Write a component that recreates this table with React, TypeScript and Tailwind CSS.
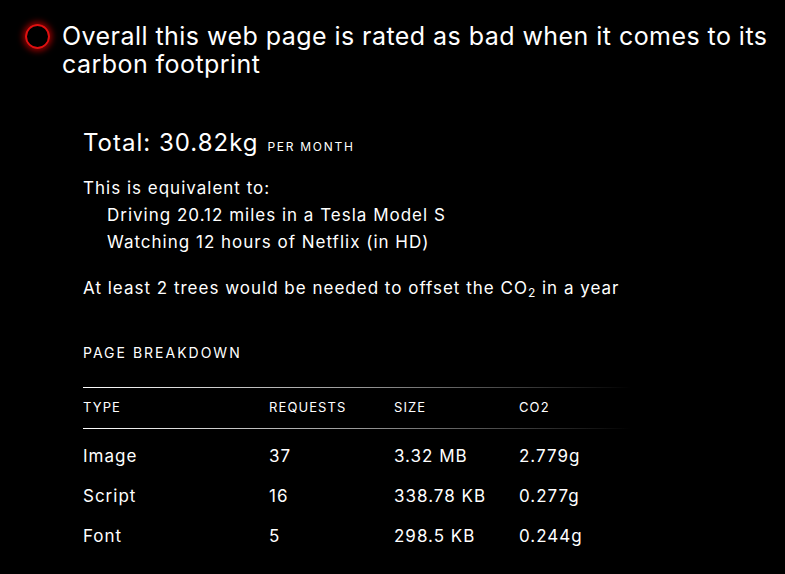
import React from "react";

const rows = [
  { type: "Image", req: "37", size: "3.32 MB", co2: "2.779g" },
  { type: "Script", req: "16", size: "338.78 KB", co2: "0.277g" },
  { type: "Font", req: "5", size: "298.5 KB", co2: "0.244g" },
];

export default function App() {
  return (
    <div
      className="min-h-[574px] w-full bg-black text-white"
      style={{ fontFamily: "Inter, 'Noto Sans', sans-serif" }}
    >
      <div className="flex items-start gap-[12px] pl-[25px] pt-[22px] pr-4">
        <div className="mt-[2px] h-[25px] w-[25px] shrink-0 rounded-full border-2 border-[#e01010] shadow-[0_0_6px_2px_rgba(255,0,0,0.6)]" />
        <h1 className="text-[25px] leading-[28px] tracking-[0.45px] text-white">
          Overall this web page is rated as bad when it comes to its carbon footprint
        </h1>
      </div>

      <div className="pl-[83px] pt-[49px]">
        <div className="flex items-baseline gap-[9px]">
          <span className="text-[24px] leading-[32px] tracking-[1px]">Total: 30.82kg</span>
          <span className="text-[12px] uppercase tracking-[1.7px]">per month</span>
        </div>

        <p className="mt-[16px] text-[17px] leading-[27px] tracking-[1px]">This is equivalent to:</p>
        <ul className="pl-[24px] text-[17px] leading-[27px] tracking-[1px]">
          <li>Driving 20.12 miles in a Tesla Model S</li>
          <li>Watching 12 hours of Netflix (in HD)</li>
        </ul>

        <p className="mt-[19px] text-[17px] leading-[27px] tracking-[1px]">
          At least 2 trees would be needed to offset the CO<sub className="text-[12px]">2</sub> in a year
        </p>

        <h2 className="mt-[41px] text-[14px] uppercase leading-[20px] tracking-[2px]">Page breakdown</h2>

        <div className="mt-[24px] w-[548px]">
          <div className="h-px w-full bg-gradient-to-r from-white via-[#999] to-transparent" />
          <div className="flex h-[40px] items-center text-[13px] uppercase tracking-[1.1px]">
            <div className="w-[186px]">Type</div>
            <div className="w-[125px]">Requests</div>
            <div className="w-[125px]">Size</div>
            <div>CO2</div>
          </div>
          <div className="h-px w-full bg-gradient-to-r from-white via-[#999] to-transparent" />
          <div className="pt-[8px]">
            {rows.map((r) => (
              <div key={r.type} className="flex h-[40px] items-center text-[17px] tracking-[1px]">
                <div className="w-[186px]">{r.type}</div>
                <div className="w-[125px]">{r.req}</div>
                <div className="w-[125px]">{r.size}</div>
                <div>{r.co2}</div>
              </div>
            ))}
          </div>
        </div>
      </div>
    </div>
  );
}
